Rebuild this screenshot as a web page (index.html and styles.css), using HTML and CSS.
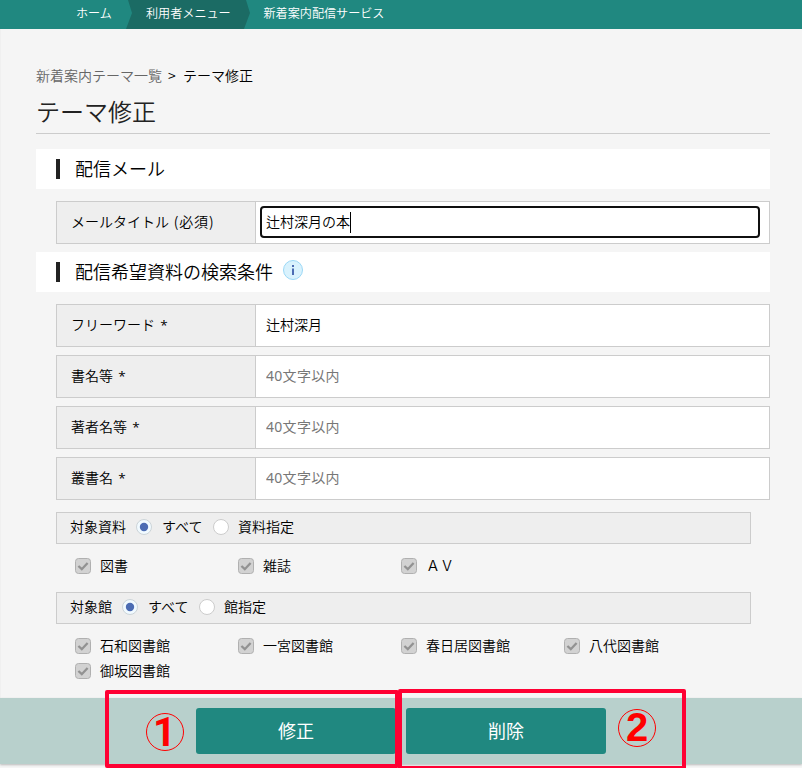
FILE: index.html
```html
<!DOCTYPE html>
<html lang="ja">
<head>
<meta charset="utf-8">
<title>テーマ修正</title>
<link rel="stylesheet" href="styles.css">
</head>
<body>
<svg class="defs" aria-hidden="true">
  <symbol id="check" viewBox="0 0 16 16">
    <rect x=".5" y=".5" width="15" height="15" rx="3" fill="#d2d2d2" stroke="#b0b0b0"/>
    <path d="M3.4 8 6.8 11.2 12.6 5" fill="none" stroke="#929292" stroke-width="2.3"/>
  </symbol>
  <symbol id="radio-on" viewBox="0 0 16 16">
    <circle cx="8" cy="8" r="7.5" fill="#f1faff" stroke="#ccd4d8"/>
    <circle cx="8" cy="8" r="4.2" fill="#4c6cb3"/>
  </symbol>
  <symbol id="radio-off" viewBox="0 0 16 16">
    <circle cx="8" cy="8" r="7.5" fill="#fff" stroke="#ccc"/>
  </symbol>
</svg>
<nav class="nav">
  <a class="home">ホーム</a>
  <a class="current">利用者メニュー</a>
  <a class="service">新着案内配信サービス</a>
</nav>
<main>
  <p class="crumbs"><a>新着案内テーマ一覧</a><span class="sep">&gt;</span><span>テーマ修正</span></p>
  <h1>テーマ修正</h1>
  <h2><span>配信メール</span></h2>
  <div class="row"><label>メールタイトル <span class="required">(必須)</span></label><div class="field focused"><span class="value">辻村深月の本</span><i class="caret"></i></div></div>
  <h2><span>配信希望資料の検索条件</span>
    <svg class="info" viewBox="0 0 20 20"><circle cx="10" cy="10" r="9.5" fill="#d9f2fd" stroke="#9bd8f6"/><path d="M9 5h2v2H9zM9 8.5h2V15H9z" fill="#4c6cb3"/></svg>
  </h2>
  <div class="row"><label>フリーワード <span class="star">*</span></label><div class="field"><input value="辻村深月"></div></div>
  <div class="row"><label>書名等 <span class="star">*</span></label><div class="field"><input placeholder="40文字以内"></div></div>
  <div class="row"><label>著者名等 <span class="star">*</span></label><div class="field"><input placeholder="40文字以内"></div></div>
  <div class="row"><label>叢書名 <span class="star">*</span></label><div class="field"><input placeholder="40文字以内"></div></div>
  <div class="scope"><span>対象資料</span><svg class="on"><use href="#radio-on"/></svg><span>すべて</span><svg class="off"><use href="#radio-off"/></svg><span>資料指定</span></div>
  <div class="checks">
    <label><svg><use href="#check"/></svg>図書</label>
    <label><svg><use href="#check"/></svg>雑誌</label>
    <label><svg><use href="#check"/></svg>ＡＶ</label>
  </div>
  <div class="scope"><span>対象館</span><svg class="on"><use href="#radio-on"/></svg><span>すべて</span><svg class="off"><use href="#radio-off"/></svg><span>館指定</span></div>
  <div class="checks">
    <label><svg><use href="#check"/></svg>石和図書館</label>
    <label><svg><use href="#check"/></svg>一宮図書館</label>
    <label><svg><use href="#check"/></svg>春日居図書館</label>
    <label><svg><use href="#check"/></svg>八代図書館</label>
    <label><svg><use href="#check"/></svg>御坂図書館</label>
  </div>
</main>
<footer class="actions">
  <button>修正</button>
  <button>削除</button>
  <div class="mark mark-one"></div>
  <div class="mark mark-two"></div>
  <span class="number number-one">1</span>
  <span class="number number-two">2</span>
</footer>
</body>
</html>
```
FILE: styles.css
```css
* { box-sizing: border-box; }
body {
  margin: 0;
  height: 768px;
  overflow: hidden;
  background: #f5f5f5;
  color: #000;
  font: 350 14px/20px "Noto Sans CJK JP DemiLight", "Noto Sans CJK JP", sans-serif;
}
.defs { display: none; }
.nav {
  display: flex;
  height: 29px;
  padding-left: 76px;
  background: #208880;
  color: #fff;
  font-size: 12.1px;
  font-weight: 400;
  line-height: 26px;
}
.nav .home { width: 50px; }
.nav .current {
  width: 124px;
  padding-left: 20px;
  background: #1b6b64;
  clip-path: polygon(2px 0, 6px 13px, 0 100%, 118px 100%, 124px 13px, 120px 0);
}
.nav .service { padding-left: 13.5px; }
main {
  height: 669px;
  padding: 36px 32px 0 35px;
  border-left: 1px solid #f0f0f0;
}
.crumbs { display: flex; margin: 0; }
.crumbs a { color: #666; }
.sep { width: 21px; padding-left: 6px; }
h1 {
  height: 38px;
  margin: 11px 0 15px;
  border-bottom: 1px solid #ccc;
  color: #222;
  font-size: 24px;
  font-weight: 300;
  line-height: 30px;
}
h2 {
  display: flex;
  align-items: center;
  height: 40px;
  margin: 0 0 12px;
  padding-left: 20px;
  background: #fff;
  font-size: 18px;
  font-weight: 350;
  line-height: 18px;
}
h2::before { content: ""; width: 4px; height: 20px; margin-right: 15px; background: #222; }
h2 span { margin-top: -2px; }
.info { width: 20px; height: 20px; margin: -4px 0 0 10px; }
.row {
  display: grid;
  grid-template-columns: 199px 1fr;
  height: 43px;
  margin: 0 0 8px 20px;
  border: 1px solid #ccc;
  background: #fff;
}
.row label {
  padding-left: 14px;
  border-right: 1px solid #ccc;
  background: #eee;
  line-height: 38px;
}
.required { margin-left: 1.5px; letter-spacing: .9px; }
.star { margin-left: 2px; font: 13.5px/1 "Open Sans", sans-serif; }
.field { display: flex; align-items: center; padding-left: 10px; }
.field input {
  width: 480px;
  height: 30px;
  margin-top: -4px;
  padding: 0;
  border: 0;
  outline: 0;
  background: transparent;
  color: #000;
  font: inherit;
}
.field input::placeholder { color: #777; font-family: "Noto Sans", "Noto Sans CJK JP", sans-serif; font-weight: 400; letter-spacing: .3px; }
.focused {
  width: 500px;
  height: 32px;
  margin: 4px 0 0 4px;
  padding-left: 4px;
  border: 2px solid #101010;
  border-radius: 4px;
}
.value { margin-top: -3px; }
.caret { width: 1px; height: 21px; background: #000; }
.scope {
  display: flex;
  width: 695px;
  height: 32px;
  margin: 12px 0 11px 20px;
  padding-left: 13px;
  border: 1px solid #ccc;
  background: #eee;
  line-height: 26px;
}
.scope svg, .checks svg { width: 16px; height: 16px; }
.scope .on { margin: 6px 10px 0; }
.scope .off { margin: 6px 9px 0 10.5px; }
.checks {
  display: grid;
  grid-template-columns: repeat(4, 163px);
  grid-auto-rows: 25px;
  margin-left: 39px;
}
.checks label { display: flex; line-height: 20px; }
.checks svg { margin: 3px 9px 0 0; }
.actions {
  position: relative;
  display: flex;
  gap: 10px;
  height: 66px;
  padding: 10px 0 0 196px;
  background: #b8d0cc;
  box-shadow: 0 1px 2px #bbb;
}
button {
  width: 200px;
  height: 46px;
  padding: 0 0 2px;
  border: 0;
  border-radius: 3px;
  background: #208880;
  color: #fff;
  font: 400 18px "Noto Sans CJK JP", sans-serif;
}
.mark { position: absolute; border: 4px solid #ff0033; border-radius: 2px; }
.mark-one { left: 105px; top: -8px; width: 294px; height: 78px; }
.mark-two { left: 398px; top: -9px; width: 288px; height: 81px; }
.number {
  position: absolute;
  width: 38px;
  height: 38px;
  border: 1px solid #f00;
  border-radius: 50%;
  color: #f00;
  font: bold 40px/35px "Liberation Sans", sans-serif;
  text-align: center;
}
.number-one { left: 146px; top: 15px; padding-right: 1px; font-family: Roboto, sans-serif; line-height: 37px; }
.number-two { left: 618px; top: 11px; }
```
